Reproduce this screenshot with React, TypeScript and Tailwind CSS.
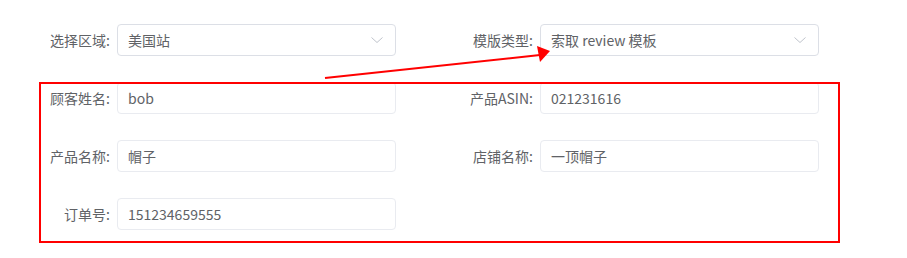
import React from 'react';

type Field = {
  label: string;
  value: string;
  select?: boolean;
};

const Chevron = () => (
  <svg width="12" height="12" viewBox="0 0 12 12" className="shrink-0">
    <path d="M0.5 3.5 L6 8.5 L11.5 3.5" fill="none" stroke="#c0c4cc" strokeWidth="1" />
  </svg>
);

const FormItem = ({ field }: { field: Field | null }) => {
  if (!field) return <div />;
  return (
    <div className="flex items-center h-[32px]">
      <label className="w-[100px] shrink-0 text-right pr-[7px] text-[14px] text-[#606266]">
        {field.label}
      </label>
      <div
        className={`flex-1 h-[32px] rounded-[4px] border flex items-center justify-between pl-[10px] pr-[12px] text-[14px] text-[#606266] bg-white ${
          field.select ? 'border-[#dcdfe6]' : 'border-[#e9ebf0]'
        }`}
      >
        <span>{field.value}</span>
        {field.select && <Chevron />}
      </div>
    </div>
  );
};

const App = () => {
  // two-column form, last row only has the left cell
  const fields: (Field | null)[] = [
    { label: '选择区域:', value: '美国站', select: true },
    { label: '模版类型:', value: '索取 review 模板', select: true },
    { label: '顾客姓名:', value: 'bob' },
    { label: '产品ASIN:', value: '021231616' },
    { label: '产品名称:', value: '帽子' },
    { label: '店铺名称:', value: '一顶帽子' },
    { label: '订单号:', value: '151234659555' },
    null,
  ];

  return (
    <div
      className="relative w-[907px] h-[258px] bg-white overflow-hidden"
      style={{ fontFamily: '"Noto Sans CJK SC", "Noto Sans", sans-serif' }}
    >
      <div className="grid grid-cols-[379px_379px] gap-x-[44px] gap-y-[26px] pl-[17px] pt-[24px]">
        {fields.map((f, i) => (
          <FormItem key={i} field={f} />
        ))}
      </div>

      {/* Annotation: red frame */}
      <div className="absolute left-[39px] top-[82px] w-[801px] h-[161px] border-2 border-[#ff0000] pointer-events-none" />

      {/* Annotation: arrow */}
      <svg className="absolute left-0 top-0 pointer-events-none" width="907" height="258">
        <line x1="325" y1="78" x2="540" y2="55" stroke="#ff0000" strokeWidth="2" />
        <polygon points="550,51 537,46 540,62" fill="#ff0000" />
      </svg>
    </div>
  );
};

export default App;
